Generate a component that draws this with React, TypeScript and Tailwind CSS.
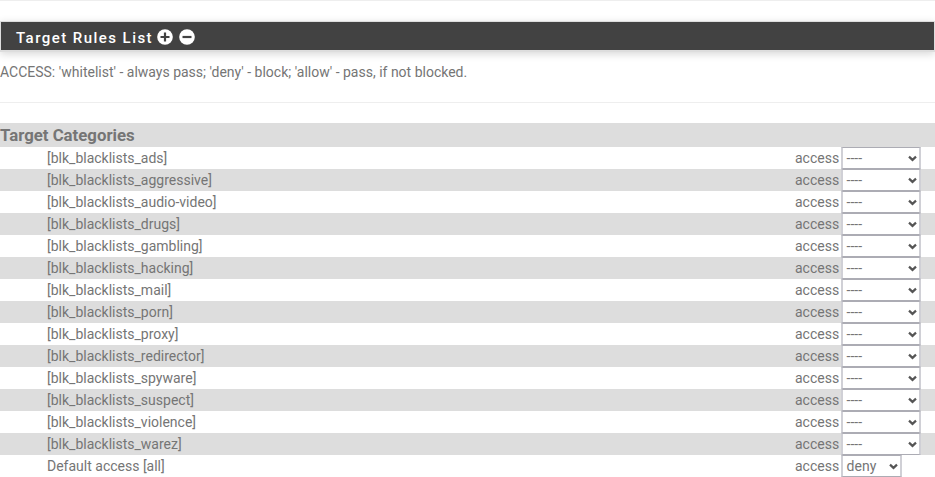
import React from "react";

const categories = [
  "ads", "aggressive", "audio-video", "drugs", "gambling", "hacking", "mail",
  "porn", "proxy", "redirector", "spyware", "suspect", "violence", "warez",
];

function Select({ value, wide }: { value: string; wide?: boolean }) {
  return (
    <div
      className={`flex h-[22px] items-center justify-between border-x-2 border-y border-x-[#d0d0d6] border-y-[#acacb4] bg-white pl-[3.6px] pr-[2.5px] ${
        wide ? "w-[80px]" : "w-[61px]"
      }`}
    >
      <span>{value}</span>
      <svg width="9" height="8" viewBox="0 0 9 8" className="mt-0.5" fill="none" stroke="#555555" strokeWidth="2.2">
        <path d="M1 1.6 L4.5 4.9 L8 1.6" />
      </svg>
    </div>
  );
}

function Row({ name, value, shaded, wide }: { name: string; value: string; shaded?: boolean; wide?: boolean }) {
  return (
    <div className={`flex h-[22px] items-center pl-[47px] ${shaded ? "bg-[#dddddd]" : "bg-white"}`}>
      <span className="w-[748px]">{name}</span>
      <span className="w-[46px]">access</span>
      <Select value={value} wide={wide} />
    </div>
  );
}

export default function App() {
  return (
    <main className="h-[477px] w-[935px] overflow-hidden bg-white font-['Roboto',sans-serif] text-[14px] leading-[22px] text-[#757575]">
      <div className="h-px bg-[#eeeeee]" />
      <div className="mt-5 h-[31px] border border-b-2 border-[#dddddd] bg-[#424242] shadow-[0_2px_8px_rgba(0,0,0,0.16)]">
        <h2 className="flex h-[28px] items-center pl-[15px] text-[15px] font-medium tracking-[1.45px] text-white">
          <span className="w-[141px] whitespace-nowrap pt-[3px]">Target Rules List</span>
          <svg width="16" height="16" viewBox="0 0 16 16" className="mt-px">
            <circle cx="8" cy="8" r="7.8" fill="#fff" />
            <path d="M3.5 8h9M8 3.5v9" stroke="#424242" strokeWidth="2.2" />
          </svg>
          <svg width="16" height="16" viewBox="0 0 16 16" className="ml-[6px] mt-px">
            <circle cx="8" cy="8" r="7.8" fill="#fff" />
            <path d="M3.5 8h9" stroke="#424242" strokeWidth="2.2" />
          </svg>
        </h2>
      </div>
      <p className="mt-[9px] h-[41px]">
        ACCESS: 'whitelist' - always pass; 'deny' - block; 'allow' - pass, if not blocked.
      </p>
      <div className="mb-5 h-px bg-[#eeeeee]" />
      <div className="h-6 bg-[#dddddd] pt-px text-[16.8px] font-bold leading-[23px]">Target Categories</div>
      {categories.map((c, i) => (
        <Row key={c} name={`[blk_blacklists_${c}]`} value="----" shaded={i % 2 === 1} wide />
      ))}
      <Row name="Default access [all]" value="deny" />
    </main>
  );
}
